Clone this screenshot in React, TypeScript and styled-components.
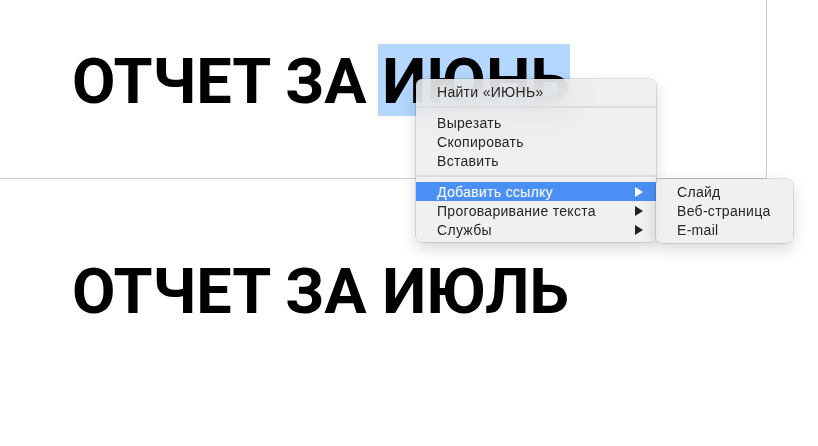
import React from 'react'
import styled, { createGlobalStyle } from 'styled-components'

const GlobalStyle = createGlobalStyle`
    html, body {
        margin: 0;
        padding: 0;
        background: #ffffff;
    }

    body {
        font-family: "Liberation Sans", Arial, sans-serif;
        overflow: hidden;
    }
`

// Canvas
const Page = styled.div`
    position: relative;
    width: 818px;
    height: 446px;
    background: #ffffff;
`

const SlideTop = styled.div`
    box-sizing: border-box;
    width: 767px;
    height: 179px;
    padding: 44px 0 0 72px;
    border-right: 1px solid #cfcfcf;
    border-bottom: 1px solid #cfcfcf;
`

const SlideBottom = styled.div`
    padding: 77px 0 0 72px;
`

const Heading = styled.h1`
    margin: 0;
    font-family: Roboto, "Liberation Sans", Arial, sans-serif;
    font-weight: 700;
    font-size: 63px;
    line-height: 72px;
    color: #000000;
    white-space: nowrap;
`

const Selected = styled.span`
    display: inline-block;
    height: 72px;
    line-height: 76px;
    margin-left: -4px;
    padding: 0 0 0 4px;
    background: #b3d7ff;
`

// Menu
const Menu = styled.div<{ $width: number }>`
    position: absolute;
    top: 79px;
    left: 416px;
    width: ${({ $width }) => $width}px;
    box-sizing: border-box;
    padding: 3px 0 3px 0;
    background: rgba(238, 238, 238, 0.86);
    backdrop-filter: blur(18px);
    border-radius: 6px;
    box-shadow: 0 0 0 0.5px rgba(0, 0, 0, 0.22), 0 6px 16px rgba(0, 0, 0, 0.16);
    font-family: "Liberation Sans", Arial, sans-serif;
    font-size: 14px;
    letter-spacing: 0.3px;
`

const Item = styled.div<{ $active?: boolean }>`
    position: relative;
    display: flex;
    align-items: center;
    height: 19px;
    padding: 0 13px 0 21px;
    color: ${({ $active }) => ($active ? '#ffffff' : '#262626')};
    background: ${({ $active }) => ($active ? '#4a8ff5' : 'transparent')};
`

const Label = styled.span`
    flex: 1;
    white-space: nowrap;
`

const Arrow = styled.span<{ $active?: boolean }>`
    width: 0;
    height: 0;
    border-top: 5px solid transparent;
    border-bottom: 5px solid transparent;
    border-left: 8px solid ${({ $active }) => ($active ? '#ffffff' : '#222222')};
`

const Separator = styled.div`
    height: 12px;
    display: flex;
    align-items: center;

    &::after {
        content: '';
        flex: 1;
        height: 2px;
        background: #dcdcdc;
    }
`

const SubMenu = styled(Menu)`
    top: -3px;
    left: 100%;
    padding-bottom: 4px;
`

export default function App() {
    return (
        <>
            <GlobalStyle />
            <Page>
                <SlideTop>
                    <Heading>
                        ОТЧЕТ ЗА <Selected>ИЮНЬ</Selected>
                    </Heading>
                </SlideTop>
                <SlideBottom>
                    <Heading>ОТЧЕТ ЗА ИЮЛЬ</Heading>
                </SlideBottom>

                <Menu $width={240}>
                    <Item><Label>Найти «ИЮНЬ»</Label></Item>
                    <Separator />
                    <Item><Label>Вырезать</Label></Item>
                    <Item><Label>Скопировать</Label></Item>
                    <Item><Label>Вставить</Label></Item>
                    <Separator />
                    <Item $active>
                        <Label>Добавить ссылку</Label>
                        <Arrow $active />
                        <SubMenu $width={137}>
                            <Item><Label>Слайд</Label></Item>
                            <Item><Label>Веб-страница</Label></Item>
                            <Item><Label>E-mail</Label></Item>
                        </SubMenu>
                    </Item>
                    <Item>
                        <Label>Проговаривание текста</Label>
                        <Arrow />
                    </Item>
                    <Item>
                        <Label>Службы</Label>
                        <Arrow />
                    </Item>
                </Menu>
            </Page>
        </>
    )
}
